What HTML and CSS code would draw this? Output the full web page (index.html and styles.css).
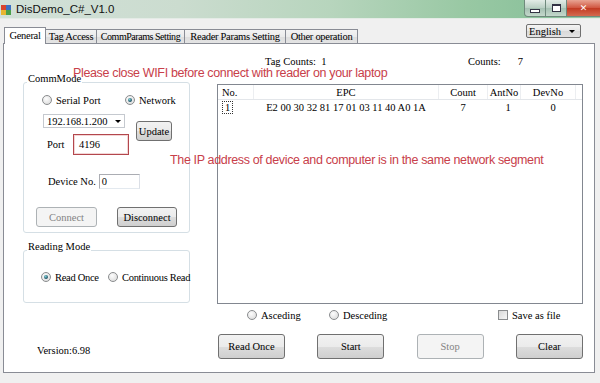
FILE: index.html
```html
<!DOCTYPE html>
<html lang="en">
<head>
    <meta charset="UTF-8">
    <title>DisDemo_C#_V1.0</title>
    <link rel="stylesheet" href="styles.css">
</head>
<body>
    <div class="titlebar">
        <svg class="app-icon" width="10" height="11" viewBox="0 0 10 11">
            <rect x="0" y="1" width="5" height="5" fill="#d9442c"/>
            <rect x="5" y="1" width="5" height="5" fill="#3b6fc2"/>
            <rect x="0" y="6" width="5" height="5" fill="#e8b530"/>
            <rect x="5" y="6" width="5" height="5" fill="#4aa04a"/>
        </svg>
        <span class="caption">DisDemo_C#_V1.0</span>
        <div class="winbtns">
            <div class="winbtn"><span class="glyph-min"></span></div>
            <div class="winbtn"><span class="glyph-max"></span></div>
            <div class="winbtn close">&#x2715;</div>
        </div>
    </div>

    <div class="topbar">
        <div class="tabs">
            <div class="tab tab-general active">General</div>
            <div class="tab tab-access">Tag Access</div>
            <div class="tab tab-comm">CommParams Setting</div>
            <div class="tab tab-reader">Reader Params Setting</div>
            <div class="tab tab-other">Other operation</div>
        </div>
        <div class="lang">English<span class="arrow"></span></div>
    </div>

    <div class="panel">
        <div class="side">
            <div class="group comm">
                <span class="group-title">CommMode</span>
                <div class="radio-row comm-radios">
                    <label class="opt"><span class="radio"></span>Serial Port</label>
                    <label class="opt"><span class="radio on"></span>Network</label>
                </div>
                <div class="net-row">
                    <div class="net-fields">
                        <div class="combo">192.168.1.200<span class="arrow"></span></div>
                        <div class="field-row port-row">
                            <span class="field-label port-label">Port</span>
                            <div class="textbox port">4196</div>
                        </div>
                    </div>
                    <button class="btn update">Update</button>
                </div>
                <div class="field-row dev-row">
                    <span class="field-label">Device No.</span>
                    <div class="textbox dev">0</div>
                </div>
                <div class="btn-row">
                    <button class="btn connect" disabled>Connect</button>
                    <button class="btn disconnect">Disconnect</button>
                </div>
            </div>

            <div class="group reading">
                <span class="group-title">Reading Mode</span>
                <div class="radio-row read-radios">
                    <label class="opt"><span class="radio on"></span>Read Once</label>
                    <label class="opt"><span class="radio"></span>Continuous Read</label>
                </div>
            </div>

            <div class="version">Version:6.98</div>
        </div>

        <div class="main">
            <div class="counts">
                <span class="tag-counts">Tag Counts:&nbsp; 1</span>
                <span class="total">Counts:</span>
                <span class="total-val">7</span>
            </div>

            <div class="list">
                <table class="tags">
                    <thead>
                        <tr>
                            <th class="c-no">No.</th>
                            <th class="c-epc">EPC</th>
                            <th class="c-count">Count</th>
                            <th class="c-ant">AntNo</th>
                            <th class="c-dev">DevNo</th>
                            <th class="c-rest"></th>
                        </tr>
                    </thead>
                    <tbody>
                        <tr>
                            <td class="c-no"><span class="focus">1</span></td>
                            <td class="c-epc">E2 00 30 32 81 17 01 03 11 40 A0 1A</td>
                            <td class="c-count">7</td>
                            <td class="c-ant">1</td>
                            <td class="c-dev">0</td>
                            <td class="c-rest"></td>
                        </tr>
                    </tbody>
                </table>
            </div>

            <div class="sort-row">
                <label class="opt"><span class="radio"></span>Asceding</label>
                <label class="opt"><span class="radio"></span>Desceding</label>
                <label class="opt"><span class="check"></span>Save as file</label>
            </div>

            <div class="actions">
                <button class="btn big">Read Once</button>
                <button class="btn big">Start</button>
                <button class="btn big" disabled>Stop</button>
                <button class="btn big">Clear</button>
            </div>
        </div>
    </div>

    <div class="note note-wifi">Please close WIFI before connect with reader on your laptop</div>
    <div class="note note-ip">The IP address of device and computer is in the same network segment</div>
</body>
</html>
```

FILE: styles.css
```css
body {
    margin: 0;
    width: 600px;
    height: 383px;
    overflow: hidden;
    position: relative;
    background: #f0f0f0;
    font-family: "Liberation Serif", serif;
    font-size: 10.5px;
    color: #000;
}

/* window chrome */
.titlebar {
    height: 18px;
    display: flex;
    align-items: center;
    background: linear-gradient(90deg, #d2e0d8 0%, #cbdccf 30%, #b7d5bd 55%, #98c8a3 78%, #8ac19b 92%, #9cc9a9 100%);
    border-bottom: 1px solid #e4ebe6;
}
.app-icon {
    margin-left: 1px;
}
.caption {
    margin-left: 5px;
    font-family: "Liberation Sans", sans-serif;
    font-size: 11.5px;
    color: #111;
}
.winbtns {
    margin-left: auto;
    align-self: flex-start;
    display: flex;
    height: 17px;
}
.winbtn {
    width: 20px;
    height: 16px;
    border: 1px solid #6f8a7c;
    border-top: none;
    border-left: none;
    background: linear-gradient(#e3ece7, #b9cfc3 50%, #a4c0b1 51%, #c4d8cc);
    display: flex;
    align-items: center;
    justify-content: center;
}
.winbtn:first-child {
    border-left: 1px solid #6f8a7c;
    border-bottom-left-radius: 4px;
}
.glyph-min {
    width: 8px;
    height: 2px;
    margin-top: 6px;
    background: #fff;
    border: 1px solid #334;
}
.glyph-max {
    width: 7px;
    height: 5px;
    border: 1px solid #334;
    border-top-width: 2px;
    background: #fff;
}
.winbtn.close {
    width: 33px;
    border-right: none;
    background: linear-gradient(#e8a493, #d0553f 50%, #c23a22 51%, #d46a4f);
    color: #fff;
    font-family: "DejaVu Sans", sans-serif;
    font-size: 9px;
    font-weight: bold;
}

.topbar {
    height: 24px;
    display: flex;
    align-items: flex-end;
}
.tabs {
    display: flex;
    align-items: flex-end;
    margin-left: 4px;
}
.tab {
    box-sizing: border-box;
    height: 14px;
    line-height: 13px;
    margin-right: -1px;
    border: 1px solid #898c95;
    border-bottom: none;
    background: linear-gradient(#f3f3f3, #ebebeb 50%, #dddddd 51%, #e4e4e4);
    white-space: nowrap;
    text-align: center;
    letter-spacing: -0.3px;
}
.tab.active {
    position: relative;
    z-index: 1;
    height: 17px;
    line-height: 15px;
    margin-bottom: -1px;
    background: #fff;
}
.tab-general { width: 42px; }
.tab-access { width: 52px; }
.tab-comm { width: 89px; font-size: 10px; letter-spacing: -0.45px; }
.tab-reader { width: 102px; }
.tab-other { width: 73px; }

.lang {
    align-self: flex-start;
    margin: 5px 19px 0 auto;
    width: 55px;
    height: 14px;
    line-height: 14px;
    box-sizing: border-box;
    padding-left: 2px;
    border: 1px solid #707070;
    border-radius: 2px;
    background: linear-gradient(#f4f4f4, #e6e6e6 50%, #d9d9d9 51%, #e3e3e3);
    position: relative;
}
.arrow {
    position: absolute;
    right: 5px;
    top: 5px;
    border-left: 3px solid transparent;
    border-right: 3px solid transparent;
    border-top: 3px solid #000;
}

/* tab page */
.panel {
    margin-left: 3px;
    width: 592px;
    height: 330px;
    box-sizing: border-box;
    border: 1px solid #898c95;
    background: #fff;
    display: flex;
}

.side {
    width: 167px;
    margin-left: 19px;
    display: flex;
    flex-direction: column;
}
.group {
    position: relative;
    box-sizing: border-box;
    border: 1px solid #d5dfe5;
    border-radius: 3px;
}
.group-title {
    position: absolute;
    top: -10px;
    left: 3px;
    padding: 0 1px;
    line-height: 12px;
    background: #fff;
}
.comm {
    margin-top: 38px;
    height: 151px;
    padding-top: 10px;
}
.reading {
    margin-top: 17px;
    height: 53px;
    padding-top: 19px;
}

.radio-row {
    display: grid;
    align-items: center;
    height: 14px;
}
.comm-radios {
    grid-template-columns: 83px auto;
    padding-left: 18px;
}
.read-radios {
    grid-template-columns: 67px auto;
    padding-left: 17px;
    letter-spacing: -0.3px;
}
.opt {
    display: flex;
    align-items: center;
    gap: 4px;
    white-space: nowrap;
}
.radio {
    width: 8px;
    height: 8px;
    border-radius: 50%;
    border: 1px solid #8a8c8e;
    background: radial-gradient(circle at 40% 35%, #fdfdfd, #d6d6d6);
    position: relative;
    flex: none;
}
.radio.on::after {
    content: "";
    position: absolute;
    left: 2px;
    top: 2px;
    width: 4px;
    height: 4px;
    border-radius: 50%;
    background: radial-gradient(circle at 40% 35%, #7fd0d8, #1d4f62 70%);
}
.check {
    width: 8px;
    height: 8px;
    border: 1px solid #8a8c8e;
    background: linear-gradient(135deg, #d8d8d8, #f6f6f6);
    flex: none;
}

.net-row {
    display: flex;
    margin-top: 7px;
}
.net-fields {
    margin-left: 19px;
}
.combo {
    width: 82px;
    height: 14px;
    line-height: 14px;
    box-sizing: border-box;
    padding-left: 3px;
    border: 1px solid #c5c9cf;
    position: relative;
}
.combo .arrow {
    right: 3px;
    top: 5px;
}
.field-row {
    display: flex;
    align-items: center;
}
.port-row {
    margin-top: 6px;
}
.field-label {
    margin-left: 4px;
}
.port-label {
    width: 26px;
}
.textbox {
    box-sizing: border-box;
    border: 1px solid #abadb3;
    border-right-color: #dbdfe6;
    border-bottom-color: #e3e9ef;
    padding-left: 2px;
}
.port {
    width: 56px;
    height: 21px;
    line-height: 19px;
    padding-left: 5px;
    border: 1px solid #b3474d;
    box-shadow: inset 0 0 0 1px #f3d6d6;
}
.dev-row {
    margin-top: 19px;
    padding-left: 20px;
}
.dev {
    width: 41px;
    height: 15px;
    line-height: 13px;
    margin-left: 3px;
}

.btn {
    font-family: inherit;
    font-size: inherit;
    color: #000;
    padding: 0;
    border: 1px solid #707070;
    border-radius: 3px;
    background: linear-gradient(#f2f2f2, #ebebeb 50%, #dddddd 51%, #cfcfcf);
}
.btn:disabled {
    color: #838383;
    border-color: #adb2b5;
    background: #f4f4f4;
}
.update {
    width: 36px;
    height: 20px;
    margin: 7px 0 0 7px;
}
.btn-row {
    display: flex;
    gap: 20px;
    margin-top: 18px;
    padding-left: 12px;
}
.connect {
    width: 61px;
    height: 20px;
}
.disconnect {
    width: 60px;
    height: 20px;
}

.version {
    margin: 42px 0 0 14px;
    line-height: 12px;
}

/* right side */
.main {
    width: 366px;
    margin-left: 27px;
    display: flex;
    flex-direction: column;
}
.counts {
    margin-top: 12px;
    height: 12px;
    line-height: 12px;
    display: flex;
    padding-left: 48px;
}
.tag-counts {
    width: 203px;
}
.total-val {
    margin-left: 17px;
}
.list {
    margin-top: 16px;
    height: 220px;
    box-sizing: border-box;
    border: 1px solid #828790;
}
.tags {
    width: 100%;
    table-layout: fixed;
    border-collapse: collapse;
}
.tags th {
    font-weight: normal;
    height: 14px;
    padding: 0;
    border-bottom: 1px solid #e3e6ea;
    border-right: 1px solid #eceef1;
    text-align: center;
}
.tags td {
    height: 14px;
    padding: 0;
    text-align: center;
}
.tags .c-no {
    width: 31px;
    text-align: left;
    padding-left: 4px;
}
.tags .c-epc {
    width: 184px;
}
.tags .c-count {
    width: 48px;
}
.tags .c-ant {
    width: 32px;
}
.tags .c-dev {
    width: 54px;
}
.tags th.c-rest {
    border-right: none;
}
.tags td.c-ant {
    padding-left: 8px;
}
.tags td.c-dev {
    padding-left: 10px;
}
.focus {
    border: 1px dotted #333;
    padding: 0 2px;
}

.sort-row {
    margin-top: 5px;
    height: 12px;
    display: grid;
    grid-template-columns: 82px 169px auto;
    align-items: center;
    padding-left: 30px;
}
.actions {
    margin-top: 13px;
    display: flex;
    justify-content: space-between;
    padding-left: 1px;
}
.big {
    width: 67px;
    height: 25px;
}

/* red annotations drawn over the screenshot */
.note {
    position: absolute;
    font-family: "Liberation Sans", sans-serif;
    font-size: 12.5px;
    line-height: 13px;
    letter-spacing: -0.35px;
    color: #c8404a;
    white-space: nowrap;
}
.note-wifi {
    left: 73px;
    top: 67px;
}
.note-ip {
    left: 170px;
    top: 154px;
}
```
